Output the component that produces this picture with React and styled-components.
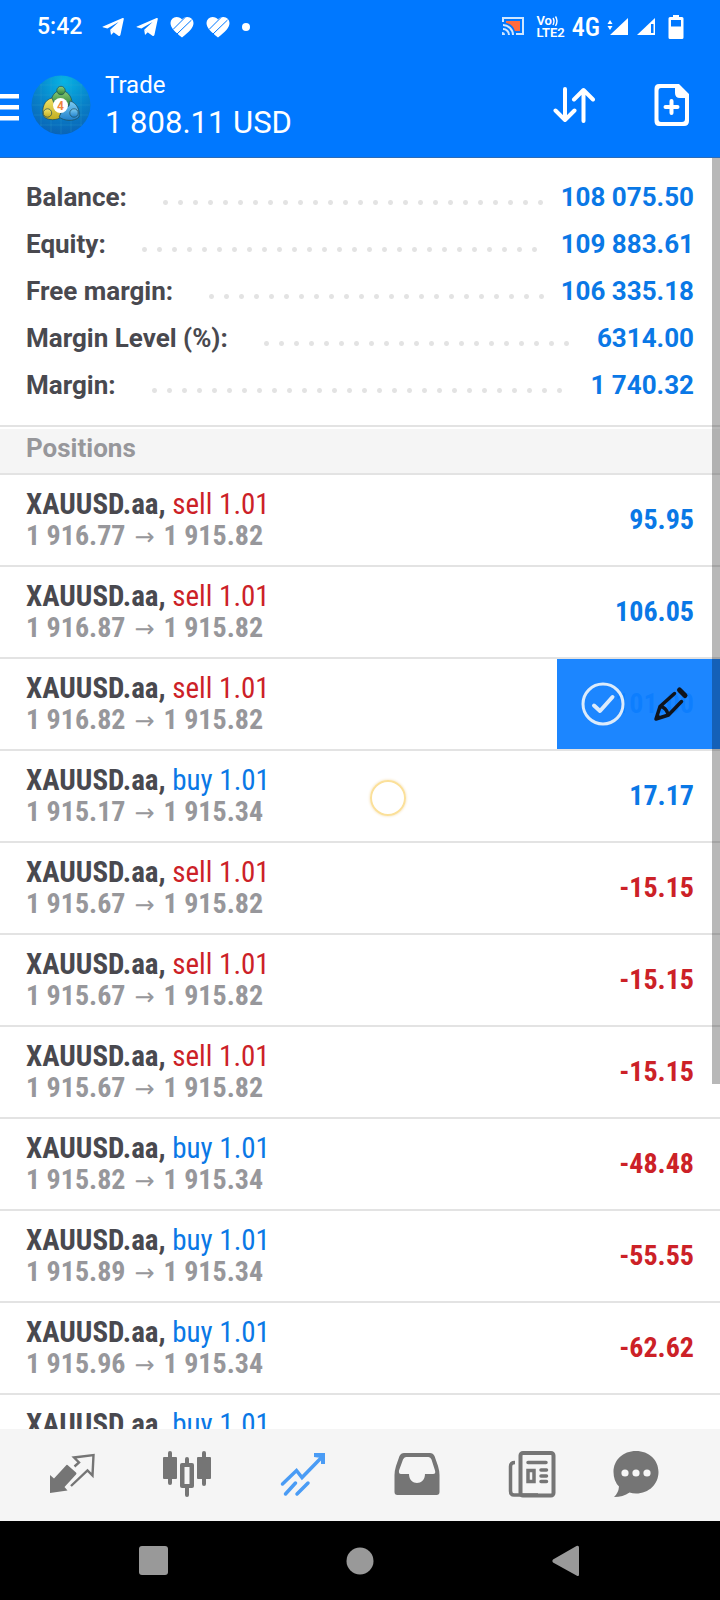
import styled, { createGlobalStyle } from "styled-components";

const summary = [
  { label: "Balance:", value: "108 075.50" },
  { label: "Equity:", value: "109 883.61" },
  { label: "Free margin:", value: "106 335.18" },
  { label: "Margin Level (%):", value: "6314.00" },
  { label: "Margin:", value: "1 740.32" },
];

const positions = [
  { side: "sell", open: "1 916.77", price: "1 915.82", profit: "95.95" },
  { side: "sell", open: "1 916.87", price: "1 915.82", profit: "106.05" },
  { side: "sell", open: "1 916.82", price: "1 915.82", profit: "101.00", swiped: true },
  { side: "buy", open: "1 915.17", price: "1 915.34", profit: "17.17" },
  { side: "sell", open: "1 915.67", price: "1 915.82", profit: "-15.15" },
  { side: "sell", open: "1 915.67", price: "1 915.82", profit: "-15.15" },
  { side: "sell", open: "1 915.67", price: "1 915.82", profit: "-15.15" },
  { side: "buy", open: "1 915.82", price: "1 915.34", profit: "-48.48" },
  { side: "buy", open: "1 915.89", price: "1 915.34", profit: "-55.55" },
  { side: "buy", open: "1 915.96", price: "1 915.34", profit: "-62.62" },
  { side: "buy", open: "1 917.35", price: "1 915.34", profit: "-203.01" },
];

function TelegramIcon() {
  return (
    <svg width="22" height="20" viewBox="0 0 22 20" fill="#fff">
      <path d="M1 9.6 20.6 1Q22 .6 21.8 2L18.4 18Q17.8 19.6 16.4 18.8L8.2 12.8 16.6 5 5.4 11.4.8 10.2Q0 9.9 1 9.6Z" />
      <path d="M8.2 12.8 9 18 12 15Z" />
    </svg>
  );
}

function HeartIcon() {
  return (
    <svg width="24" height="22" viewBox="0 0 24 22">
      <path
        fill="#fff"
        d="M12 21.5C5 16 .5 12 .5 7A6 6 0 0 1 6.500 1C9 1 11 2 12 3.500 13 2 15 1 17.500 1A6 6 0 0 1 23.500 7C23.500 12 19 16 12 21.500Z"
      />
      <path stroke="#0078ff" strokeWidth="1" d="M3 13.500 15 1.500M7 18 21.500 4" />
    </svg>
  );
}

function CastIcon() {
  return (
    <svg width="22" height="19" viewBox="0 0 22 19" fill="none">
      <path fill="#ff6b3d" d="M4 4H18V14H13Q11 7 4 6Z" />
      <path stroke="#cfe6ff" strokeWidth="2" d="M1 5V1H21V17H14" />
      <path
        stroke="#cfe6ff"
        strokeWidth="2"
        d="M1 8A10 10 0 0 1 11 18M1 12A6 6 0 0 1 7 18"
      />
      <path fill="#cfe6ff" d="M0 15A3 3 0 0 1 3 18H0Z" />
    </svg>
  );
}

function WavesIcon() {
  return (
    <svg width="8" height="12" viewBox="0 0 8 12" fill="none" stroke="#fff">
      <path strokeWidth="1.400" d="M1 3Q3 6 1 10M3.500 1.500Q6.500 6 3.500 11" />
    </svg>
  );
}

function SignalIcon() {
  return (
    <svg width="22" height="20" viewBox="0 0 22 20" fill="#fff">
      <path d="M3 3 5.500 7H.500ZM3 13 .500 9H5.500ZM21 1V18H3Z" />
    </svg>
  );
}

function SignalOffIcon() {
  return (
    <svg width="20" height="20" viewBox="0 0 20 20">
      <path fill="#fff" d="M19 1V18H1Z" />
      <path fill="#0078ff" d="M15 7H17.500V16H15Z" />
    </svg>
  );
}

function BatteryIcon() {
  return (
    <svg width="16" height="24" viewBox="0 0 16 24">
      <path
        fill="#fff"
        d="M5 0H11V2H14Q15.500 2 15.500 3.500V22.500Q15.500 24 14 24H2Q.500 24 .500 22.500V3.500Q.500 2 2 2H5Z"
      />
      <path fill="#0078ff" d="M3 5H13V11.500H3Z" />
    </svg>
  );
}

function MenuIcon() {
  return (
    <svg width="19" height="32" viewBox="0 0 19 32" fill="#fff">
      <path d="M0 5H19V9.500H0ZM0 16H19V20.500H0ZM0 27H19V31.500H0Z" />
    </svg>
  );
}

function AppLogo() {
  return (
    <svg width="60" height="60" viewBox="0 0 60 60">
      <defs>
        <radialGradient id="logo-sky" cx="0.55" cy="0.1" r="0.95">
          <stop offset="0" stopColor="#06b4e4" />
          <stop offset="0.55" stopColor="#0880c8" />
          <stop offset="1" stopColor="#0a60b4" />
        </radialGradient>
        <linearGradient id="logo-green" x1="0" y1="0" x2="0" y2="1">
          <stop offset="0" stopColor="#8fd07c" />
          <stop offset="1" stopColor="#2c8136" />
        </linearGradient>
        <linearGradient id="logo-yellow" x1="0" y1="0" x2="0" y2="1">
          <stop offset="0" stopColor="#f2e46a" />
          <stop offset="1" stopColor="#c0ac20" />
        </linearGradient>
        <linearGradient id="logo-blue" x1="0" y1="0" x2="0" y2="1">
          <stop offset="0" stopColor="#7cccf2" />
          <stop offset="1" stopColor="#1f80cc" />
        </linearGradient>
      </defs>
      <circle cx="30" cy="30" r="29.500" fill="url(#logo-sky)" />
      <path
        stroke="#3aa7cf"
        strokeOpacity="0.25"
        d="M10 9V51M20 3V57M30 1V59M40 3V57M50 9V51M9 10H51M3 20H57M1 30H59M3 40H57M9 50H51"
      />
      <g stroke="#1c4a58" strokeWidth="0.700">
        <path
          fill="url(#logo-green)"
          d="M30 15C36 16 41 21 41 28L36 31 24 31 20 28C20 21 24 16 30 15Z"
        />
        <path
          fill="url(#logo-yellow)"
          d="M21 23C13 25 11 33 12 40 14 45 23 46 29 43L30 34 24 31Z"
        />
        <path
          fill="url(#logo-blue)"
          d="M39 26C46 28 49 35 48 42 43 47 33 46 28 42L32 34 38 31Z"
        />
        <circle cx="30" cy="15.500" r="4.200" fill="url(#logo-green)" />
        <circle cx="16.500" cy="38" r="4.200" fill="url(#logo-yellow)" />
        <circle cx="43" cy="38" r="4.200" fill="url(#logo-blue)" />
      </g>
      <circle cx="29.500" cy="30.500" r="7.500" fill="#fff" />
      <text
        x="29.500"
        y="35"
        fill="#f0843c"
        fontFamily="Roboto, sans-serif"
        fontSize="12"
        fontWeight="700"
        textAnchor="middle"
      >
        4
      </text>
    </svg>
  );
}

function SortIcon() {
  return (
    <svg width="42" height="36" viewBox="0 0 42 36" fill="none" stroke="#fff">
      <g strokeWidth="4" strokeLinecap="round" strokeLinejoin="round">
        <path d="M12 2V33M2.500 23.500 12 33 21.500 23.500" />
        <path d="M30.500 34V3M21 12.500 30.500 3 40 12.500" />
      </g>
    </svg>
  );
}

function NewOrderIcon() {
  return (
    <svg width="36" height="42" viewBox="0 0 36 42">
      <path
        fill="#fff"
        fillRule="evenodd"
        d="M5 0H25L35 10V37Q35 42 30 42H5Q.500 42 .500 37V5Q.500 0 5 0ZM7 4Q4.500 4 4.500 7V35Q4.500 38 7 38H28Q31 38 31 35V14H26Q21 14 21 9V4Z"
      />
      <path
        stroke="#fff"
        strokeWidth="4"
        strokeLinecap="round"
        d="M17.500 17V29M11.500 23H23.500"
      />
    </svg>
  );
}

function CheckIcon() {
  return (
    <svg width="44" height="44" viewBox="0 0 44 44" fill="none" stroke="#dcebfb">
      <circle cx="22" cy="22" r="20" strokeWidth="3" />
      <path
        strokeWidth="4"
        strokeLinecap="round"
        strokeLinejoin="round"
        d="M13 23.500 19 29 31.500 15"
      />
    </svg>
  );
}

function EditIcon() {
  return (
    <svg width="36" height="36" viewBox="0 0 36 36" fill="none" stroke="#10141c">
      <path strokeWidth="5" strokeLinecap="round" d="M26.500 4 32 9.500" />
      <path
        strokeWidth="3.500"
        strokeLinecap="round"
        strokeLinejoin="round"
        d="M21.500 7.500 7 20.500 3 33 15.500 29 28.500 15.500M7 20.500Q13 21 15.500 29"
      />
      <path fill="#10141c" stroke="none" d="M2 34 4 27 9 32Z" />
    </svg>
  );
}

function QuotesIcon() {
  return (
    <svg width="48" height="48" viewBox="0 0 48 48">
      <path
        fill="#757575"
        d="M19.500 14 28 21.500Q29 22.500 28 23.500L16.500 36 19.500 39.500 2 42V24L6 27.500 18 14.500Q18.700 13.500 19.500 14Z"
      />
      <path
        fill="none"
        stroke="#757575"
        strokeWidth="2.400"
        d="M26.500 15.500 31 11.500 26 6.500 45.500 4 44.500 24.500 39.500 19.500 23 35"
      />
    </svg>
  );
}

function ChartIcon() {
  return (
    <svg width="48" height="48" viewBox="0 0 48 48" fill="#757575">
      <rect x="0" y="6" width="14" height="22" rx="1" />
      <rect x="5" y="0" width="4" height="34" rx="2" />
      <rect x="34" y="6" width="14" height="22" rx="1" />
      <rect x="39" y="0" width="4" height="35" rx="2" />
      <rect x="22" y="6" width="4" height="40" rx="2" />
      <rect x="17" y="12" width="14" height="25" rx="2" />
      <rect x="21.500" y="16" width="5" height="17" fill="#f5f5f5" />
    </svg>
  );
}

function TradeIcon() {
  return (
    <svg width="48" height="48" viewBox="0 0 48 48" fill="none" stroke="#4a9cf5">
      <path
        strokeWidth="3.500"
        strokeLinecap="round"
        d="M4.500 33 18.500 19.500 24 26.500 43.500 6.500M7.500 43 17.500 32M19 43 30 32"
      />
      <path fill="#4a9cf5" stroke="none" d="M36 2H47V13L43 13V7L36 6Z" />
    </svg>
  );
}

function HistoryIcon() {
  return (
    <svg width="48" height="48" viewBox="0 0 48 48">
      <path
        fill="#757575"
        fillRule="evenodd"
        d="M11 2H37Q40 2 41.500 5L45 15Q46.500 20 46.500 24V41Q46.500 44 43.500 44H4.500Q1.500 44 1.500 41V24Q1.500 20 3 15L6.500 5Q8 2 11 2ZM13 6Q11 6 10 8.500L6 19.500Q5.500 23 8 23H16C16 35 32 35 32 23H40Q43 23 42 19.500L38.500 8.500Q37.500 6 35.500 6Z"
      />
    </svg>
  );
}

function NewsIcon() {
  return (
    <svg width="48" height="48" viewBox="0 0 48 48" fill="none" stroke="#757575">
      <path strokeWidth="3.500" d="M7 11.500Q2.500 11.500 2.500 15.500V40Q2.500 44 6 44H30" />
      <rect x="12.500" y="2" width="33" height="42.500" rx="2.500" strokeWidth="4" />
      <rect x="20" y="19.500" width="6" height="11" strokeWidth="3.500" />
      <path
        strokeWidth="3.500"
        strokeLinecap="round"
        d="M20 11.500H38M33 19H38.500M33 25H38.500M33 30.500H38.500"
      />
    </svg>
  );
}

function ChatIcon() {
  return (
    <svg width="48" height="48" viewBox="0 0 48 48">
      <path
        fill="#757575"
        d="M24 0C37 0 46.500 9 46.500 21S37 42.500 24 42.500Q20.500 42.500 17.500 41.500 11 46 2 46 6.500 42 7 35.500 1.500 30 1.500 21C1.500 9 11 0 24 0Z"
      />
      <g fill="#f5f5f5">
        <circle cx="13" cy="22" r="3.600" />
        <circle cx="24" cy="22" r="3.600" />
        <circle cx="35" cy="22" r="3.600" />
      </g>
    </svg>
  );
}

const tabs = [
  { name: "Quotes", Icon: QuotesIcon },
  { name: "Charts", Icon: ChartIcon },
  { name: "Trade", Icon: TradeIcon },
  { name: "History", Icon: HistoryIcon },
  { name: "News", Icon: NewsIcon },
  { name: "Messages", Icon: ChatIcon },
];

function StatusBar() {
  return (
    <StatusWrapper>
      <StatusGroup $gap={12}>
        <Clock>5:42</Clock>
        <TelegramIcon />
        <TelegramIcon />
        <HeartIcon />
        <HeartIcon />
        <StatusDot />
      </StatusGroup>
      <StatusGroup $gap={12}>
        <CastIcon />
        <StatusGroup $gap={7}>
          <Volte>
            <VolteLine>
              Vo
              <WavesIcon />
            </VolteLine>
            <VolteLine>LTE2</VolteLine>
          </Volte>
          <Network>4G</Network>
          <SignalIcon />
          <SignalOffIcon />
        </StatusGroup>
        <BatteryIcon />
      </StatusGroup>
    </StatusWrapper>
  );
}

function Position({ side, open, price, profit, swiped }) {
  return (
    <PositionRow>
      <div>
        <PositionTitle>
          XAUUSD.aa, <Side $side={side}>{side} 1.01</Side>
        </PositionTitle>
        <Prices>
          <span>{open}</span>
          <Arrow>→</Arrow>
          <span>{price}</span>
        </Prices>
      </div>
      <Profit $negative={profit.startsWith("-")}>{profit}</Profit>
      {swiped && (
        <SwipeActions>
          <IconButton aria-label="Close position">
            <CheckIcon />
          </IconButton>
          <IconButton aria-label="Modify position">
            <EditIcon />
          </IconButton>
        </SwipeActions>
      )}
    </PositionRow>
  );
}

function App() {
  return (
    <Screen>
      <GlobalStyle />
      <TopBar>
        <StatusBar />
        <Header>
          <IconButton aria-label="Menu">
            <MenuIcon />
          </IconButton>
          <AppLogo />
          <HeaderText>
            <Title>Trade</Title>
            <Amount>1 808.11 USD</Amount>
          </HeaderText>
          <HeaderActions>
            <IconButton aria-label="Sort">
              <SortIcon />
            </IconButton>
            <IconButton aria-label="New order">
              <NewOrderIcon />
            </IconButton>
          </HeaderActions>
        </Header>
      </TopBar>
      <Content>
        <Summary>
          {summary.map(({ label, value }) => (
            <SummaryRow key={label}>
              <dt>{label}</dt>
              <Leader aria-hidden="true" />
              <SummaryValue>{value}</SummaryValue>
            </SummaryRow>
          ))}
        </Summary>
        <SectionTitle>Positions</SectionTitle>
        <PositionList>
          {positions.map((position, index) => (
            <Position key={index} {...position} />
          ))}
        </PositionList>
        <ScrollThumb />
        <TouchPoint />
      </Content>
      <TabBar>
        {tabs.map(({ name, Icon }) => (
          <IconButton key={name} aria-label={name}>
            <Icon />
          </IconButton>
        ))}
      </TabBar>
      <SystemNav>
        <IconButton aria-label="Recent apps">
          <svg width="32" height="32" viewBox="0 0 32 32" fill="#999">
            <rect x="1" y="1" width="29" height="29" rx="3" />
          </svg>
        </IconButton>
        <IconButton aria-label="Home">
          <svg width="32" height="32" viewBox="0 0 32 32" fill="#999">
            <circle cx="16" cy="16" r="13.500" />
          </svg>
        </IconButton>
        <IconButton aria-label="Back">
          <svg width="32" height="32" viewBox="0 0 32 32" fill="#999">
            <path d="M3 14.500 26.500 1Q29 0 29 2.500V29.500Q29 32 26.500 30.500L3 17.500Q1.500 16 3 14.500Z" />
          </svg>
        </IconButton>
      </SystemNav>
    </Screen>
  );
}

const GlobalStyle = createGlobalStyle`
  * {
    box-sizing: border-box;
  }

  body {
    margin: 0;
    font-family: Roboto, "Liberation Sans", sans-serif;
    color: #49494f;
    background-color: #fff;
  }

  svg {
    display: block;
    flex-shrink: 0;
  }
`;

const condensed = `"Roboto Condensed", Roboto, "Liberation Sans", sans-serif`;

const Screen = styled.div`
  display: flex;
  flex-direction: column;
  height: 100vh;
`;

const TopBar = styled.header`
  background-color: #0078ff;
  border-bottom: 1px solid #2c6cb8;
  color: #fff;
`;

const StatusWrapper = styled.div`
  display: flex;
  justify-content: space-between;
  align-items: center;
  height: 53px;
  padding: 0 36px 0 37px;
`;

const StatusGroup = styled.div`
  display: flex;
  align-items: center;
  gap: ${(props) => props.$gap}px;
`;

const Clock = styled.span`
  font-size: 23px;
  font-weight: 500;
  margin-right: 8px;
`;

const StatusDot = styled.span`
  width: 8px;
  height: 8px;
  border-radius: 50%;
  background-color: #fff;
`;

const Volte = styled.span`
  display: flex;
  flex-direction: column;
`;

const VolteLine = styled.span`
  display: flex;
  height: 12px;
  font-size: 13px;
  line-height: 12px;
  font-weight: 600;
`;

const Network = styled.span`
  font-family: ${condensed};
  font-size: 26px;
  font-weight: 500;
`;

const Header = styled.div`
  display: flex;
  align-items: center;
  height: 104px;
  padding-right: 30px;
`;

const IconButton = styled.button`
  display: flex;
  justify-content: center;
  align-items: center;
  padding: 0;
  border: none;
  background: none;
  cursor: pointer;

  ${Header} > & {
    margin-right: 12px;
  }
`;

const HeaderText = styled.div`
  flex: 1;
  margin-left: 14px;
`;

const Title = styled.h1`
  margin: 0;
  font-size: 24px;
  line-height: 36px;
  font-weight: 400;
`;

const Amount = styled.p`
  margin: 0;
  font-size: 31px;
  line-height: 40px;
  font-weight: 400;
`;

const HeaderActions = styled.div`
  display: flex;
  align-items: center;
  gap: 59px;
`;

const Content = styled.main`
  position: relative;
  flex: 1;
  min-height: 0;
  overflow: hidden;
`;

const Summary = styled.dl`
  margin: 0;
  padding: 16px 26px;
  border-bottom: 2px solid #e3e3e3;
  font-size: 26px;
  line-height: 47px;
  font-weight: 700;
`;

const SummaryRow = styled.div`
  display: flex;
`;

const SummaryValue = styled.dd`
  margin: 0;
  color: #0a78e6;
`;

const Leader = styled.span`
  flex: 1;
  margin: 0 9px 0 31px;

  &::before {
    content: "";
    display: block;
    width: round(down, 100%, 15px);
    height: 15px;
    margin-top: 21px;
    background: radial-gradient(circle, #e3e3e3 2px, transparent 3px) 0 0 / 15px 15px;
  }
`;

const SectionTitle = styled.h2`
  margin: 2px 0 0;
  padding: 0 26px 6px;
  border-bottom: 2px solid #e3e3e3;
  background-color: #f5f5f5;
  color: #97979b;
  font-size: 26px;
  line-height: 38px;
  font-weight: 700;
`;

const PositionList = styled.ul`
  margin: 0;
  padding: 0;
  list-style: none;
`;

const PositionRow = styled.li`
  position: relative;
  display: flex;
  justify-content: space-between;
  align-items: center;
  height: 92px;
  padding: 0 26px;
  border-bottom: 2px solid #e3e3e3;
  font-family: ${condensed};
  font-size: 28px;
  line-height: 32px;
  font-weight: 700;
`;

const PositionTitle = styled.div`
  font-size: 29px;
`;

const Side = styled.span`
  color: ${(props) => (props.$side === "buy" ? "#0a78e6" : "#cc2127")};
  font-weight: 400;
`;

const Prices = styled.div`
  display: flex;
  gap: 9px;
  color: #97979b;
`;

const Arrow = styled.span`
  font-family: "Noto Sans", "DejaVu Sans", sans-serif;
  font-size: 24px;
  font-weight: 400;
`;

const Profit = styled.span`
  color: ${(props) => (props.$negative ? "#cc2127" : "#0a78e6")};
`;

const SwipeActions = styled.div`
  position: absolute;
  top: 0;
  right: 0;
  bottom: 0;
  display: flex;
  align-items: center;
  justify-content: space-between;
  width: 163px;
  padding: 0 31px 0 24px;
  background-color: rgba(14, 126, 255, 0.94);
`;

const ScrollThumb = styled.div`
  position: absolute;
  top: 0;
  right: 0;
  width: 8px;
  height: 926px;
  background-color: rgba(0, 0, 0, 0.28);
`;

const TouchPoint = styled.div`
  position: absolute;
  top: 622px;
  left: 370px;
  width: 36px;
  height: 36px;
  border: 2px solid #fbe09a;
  border-radius: 50%;
  box-shadow: 0 0 3px #f3dcae;
`;

const TabBar = styled.nav`
  display: grid;
  grid-template-columns: repeat(5, 5fr) 4fr;
  height: 92px;
  padding: 0 38px 0 14px;
  background-color: #f5f5f5;
`;

const SystemNav = styled.nav`
  display: grid;
  grid-template-columns: repeat(3, 1fr);
  height: 79px;
  padding: 0 51px;
  background-color: #000;
`;

export default App;
